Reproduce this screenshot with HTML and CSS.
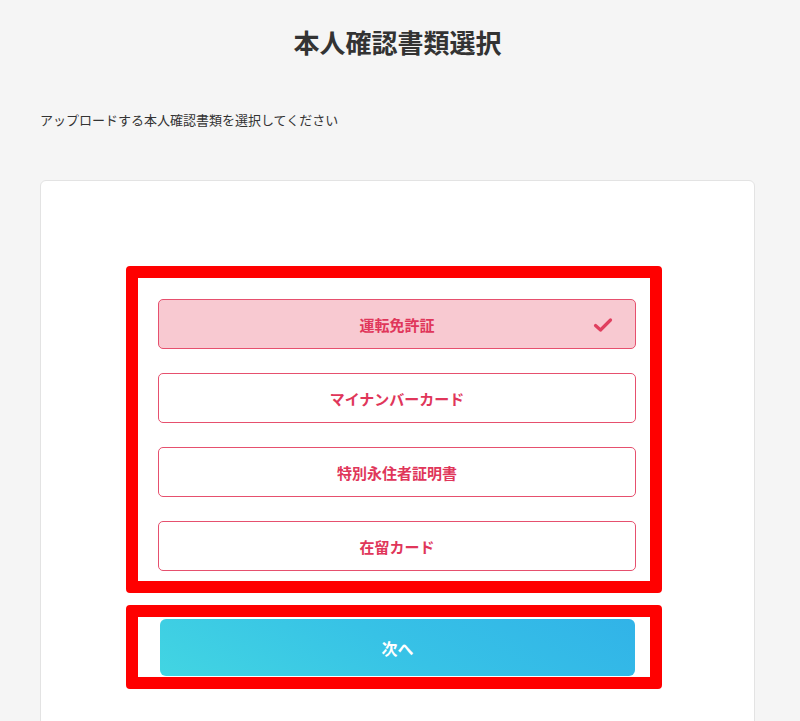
FILE: index.html
```html
<!DOCTYPE html>
<html lang="ja">
<head>
<meta charset="utf-8">
<link rel="stylesheet" href="styles.css">
</head>
<body>
<main class="page">
  <h1 class="title">本人確認書類選択</h1>
  <p class="lead">アップロードする本人確認書類を選択してください</p>
  <section class="card">
    <div class="mark mark-options">
      <ul class="options">
        <li class="option selected">運転免許証
          <svg class="check" width="20" height="16" viewBox="0 0 20 16"><path d="M2.5 8.5 L7.5 13 L17.5 3" fill="none" stroke="#e0405f" stroke-width="3.2" stroke-linecap="round" stroke-linejoin="round"/></svg>
        </li>
        <li class="option">マイナンバーカード</li>
        <li class="option">特別永住者証明書</li>
        <li class="option">在留カード</li>
      </ul>
    </div>
    <div class="mark mark-next">
      <button class="next">次へ</button>
    </div>
  </section>
</main>
</body>
</html>
```
FILE: styles.css
```css
* { box-sizing: border-box; }
html, body { margin: 0; padding: 0; }
body {
  background: #f5f5f5;
  font-family: "Noto Sans CJK JP", "Noto Sans", sans-serif;
  color: #333;
  height: 721px;
  overflow: hidden;
}
.page {
  padding: 0 45px 0 40px;
}
.title {
  margin: 0;
  padding-top: 24px;
  height: 96px;
  text-align: center;
  font-size: 26px;
  line-height: 36px;
  font-weight: 700;
  color: #333;
}
.lead {
  margin: 0;
  font-size: 13px;
  line-height: 20px;
  color: #333;
  height: 84px;
  padding-top: 14px;
}
.card {
  background: #fff;
  border: 1px solid #e3e3e3;
  border-radius: 6px;
  height: 600px;
  padding-top: 85px;
}
.mark {
  width: 536px;
  margin: 0 auto 0 85px;
  border: 12px solid #ff0000;
  border-radius: 4px;
}
.mark-options {
  padding: 21px 14px 10px 20px;
}
.options {
  list-style: none;
  margin: 0;
  padding: 0;
  display: flex;
  flex-direction: column;
  gap: 24px;
}
.option {
  position: relative;
  height: 50px;
  border: 1px solid #e6506e;
  border-radius: 5px;
  background: #fff;
  color: #e0365a;
  font-size: 15px;
  font-weight: 700;
  display: flex;
  align-items: center;
  justify-content: center;
}
.option.selected {
  background: #f8c9d1;
}
.check {
  position: absolute;
  right: 22px;
  top: 17px;
}
.mark-next {
  margin-top: 12px;
  padding: 2px 15px 1px 22px;
}
.next {
  display: block;
  width: 100%;
  height: 57px;
  border: none;
  border-radius: 6px;
  background: linear-gradient(30deg, #42d5e2 0%, #37c2e6 50%, #31b3e8 100%);
  color: #fff;
  font-family: "Noto Sans CJK JP", "Noto Sans", sans-serif;
  font-size: 16px;
  font-weight: 700;
}
```
